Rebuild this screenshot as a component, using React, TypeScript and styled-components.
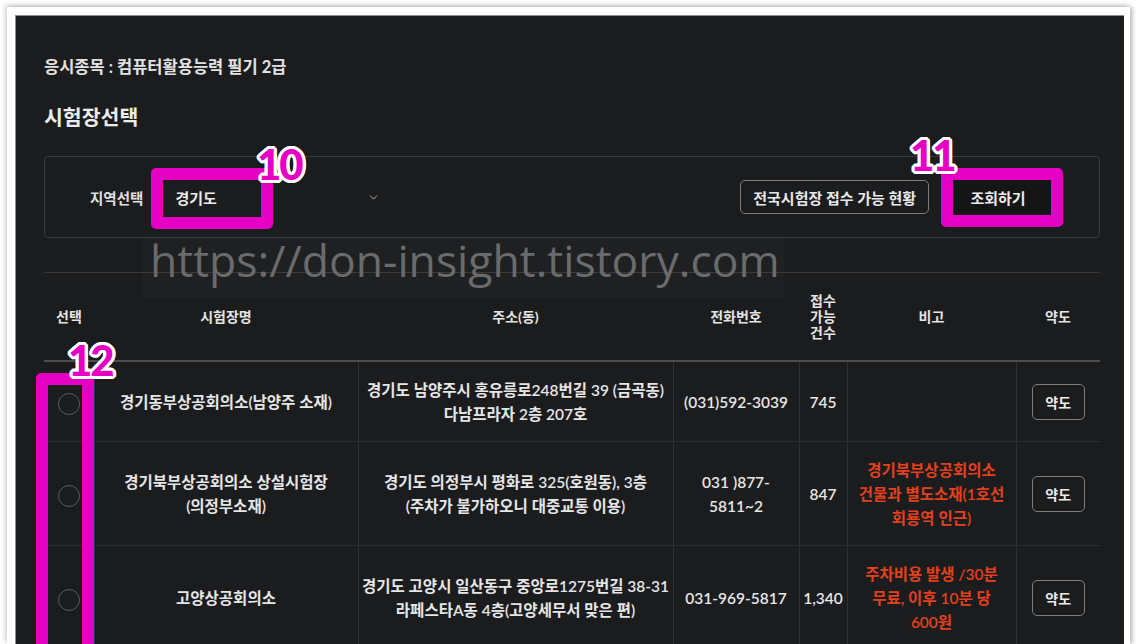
import React from "react";
import styled, { createGlobalStyle } from "styled-components";
import { ChevronDown } from "lucide-react";

const GlobalStyle = createGlobalStyle`
  html, body {
    margin: 0;
    padding: 0;
    background: #ffffff;
  }

  body {
    width: 1140px;
    height: 644px;
    overflow: hidden;
    font-family: "Lato", "Noto Sans CJK KR", sans-serif;
  }
`;

type Row = {
  name: string[];
  address: string[];
  phone: string[];
  count: string;
  note: string[];
};

const rows: Row[] = [
  {
    name: ["경기동부상공회의소(남양주 소재)"],
    address: ["경기도 남양주시 홍유릉로248번길 39 (금곡동)", "다남프라자 2층 207호"],
    phone: ["(031)592-3039"],
    count: "745",
    note: [],
  },
  {
    name: ["경기북부상공회의소 상설시험장", "(의정부소재)"],
    address: ["경기도 의정부시 평화로 325(호원동), 3층", "(주차가 불가하오니 대중교통 이용)"],
    phone: ["031 )877-", "5811~2"],
    count: "847",
    note: ["경기북부상공회의소", "건물과 별도소재(1호선", "회룡역 인근)"],
  },
  {
    name: ["고양상공회의소"],
    address: ["경기도 고양시 일산동구 중앙로1275번길 38-31", "라페스타A동 4층(고양세무서 맞은 편)"],
    phone: ["031-969-5817"],
    count: "1,340",
    note: ["주차비용 발생 /30분", "무료, 이후 10분 당", "600원"],
  },
];

const Lines = ({ lines }: { lines: string[] }) => (
  <>
    {lines.map((line, i) => (
      <React.Fragment key={i}>
        {i > 0 && <br />}
        {line}
      </React.Fragment>
    ))}
  </>
);

const App = () => {
  return (
    <>
      <GlobalStyle />
      <Frame>
        <Sheet>
          <Panel>
            <Subject>응시종목 : 컴퓨터활용능력 필기 2급</Subject>
            <Title>시험장선택</Title>

            <FilterBox>
              <FilterLabel>지역선택</FilterLabel>
              <Select>
                <span>경기도</span>
                <ChevronDown size={13} strokeWidth={1.6} color="#c8c8c8" />
              </Select>
              <Spacer />
              <OutlineButton>전국시험장 접수 가능 현황</OutlineButton>
              <SearchButton>조회하기</SearchButton>
            </FilterBox>

            <Table>
              <colgroup>
                <col style={{ width: 50 }} />
                <col style={{ width: 264 }} />
                <col style={{ width: 315 }} />
                <col style={{ width: 126 }} />
                <col style={{ width: 48 }} />
                <col style={{ width: 169 }} />
                <col style={{ width: 84 }} />
              </colgroup>
              <thead>
                <tr>
                  <HeadCell>선택</HeadCell>
                  <HeadCell>시험장명</HeadCell>
                  <HeadCell>주소(동)</HeadCell>
                  <HeadCell>전화번호</HeadCell>
                  <HeadCell>
                    접수
                    <br />
                    가능
                    <br />
                    건수
                  </HeadCell>
                  <HeadCell>비고</HeadCell>
                  <HeadCell>약도</HeadCell>
                </tr>
              </thead>
              <tbody>
                {rows.map((row, i) => (
                  <tr key={i}>
                    <Cell>
                      <Radio />
                    </Cell>
                    <Cell>
                      <Lines lines={row.name} />
                    </Cell>
                    <Cell>
                      <Lines lines={row.address} />
                    </Cell>
                    <Cell>
                      <Lines lines={row.phone} />
                    </Cell>
                    <Cell>{row.count}</Cell>
                    <Cell $warn>
                      <Lines lines={row.note} />
                    </Cell>
                    <Cell>
                      <MapButton>약도</MapButton>
                    </Cell>
                  </tr>
                ))}
              </tbody>
            </Table>

            <Watermark>https://don-insight.tistory.com</Watermark>

            <Marker $left={135} $top={152} $width={122} $height={61} />
            <MarkerNumber $left={241} $top={127}>10</MarkerNumber>
            <Marker $left={925} $top={152} $width={122} $height={59} />
            <MarkerNumber $left={894} $top={118}>11</MarkerNumber>
            <Marker $left={20} $top={357} $width={58} $height={320} />
            <MarkerNumber $left={52} $top={323}>12</MarkerNumber>
          </Panel>
        </Sheet>
      </Frame>
    </>
  );
};

export default App;

const Frame = styled.div`
  width: 1140px;
  height: 644px;
  box-sizing: border-box;
  padding: 7px 10px 0 7px;
  background: #ffffff;
`;

const Sheet = styled.div`
  height: 100%;
  box-sizing: border-box;
  padding: 8px 6px 0 8px;
  background: #ffffff;
  box-shadow: -2px -2px 5px rgba(0, 0, 0, 0.18), 3px 0 4px rgba(0, 0, 0, 0.22);
`;

const Panel = styled.div`
  position: relative;
  height: 100%;
  box-sizing: border-box;
  overflow: hidden;
  padding: 39px 24px 0 28px;
  background: #1b1c1e;
  border-top: 1px solid #8c8c8c;
  border-left: 1px solid #8c8c8c;
  color: #e6e6e6;
`;

const Subject = styled.div`
  font-size: 16.5px;
  line-height: 24px;
  font-weight: 700;
  color: #e2e2e2;
`;

const Title = styled.h2`
  margin: 23px 0 0;
  font-size: 20.5px;
  line-height: 30px;
  font-weight: 700;
  color: #ececec;
`;

const FilterBox = styled.div`
  margin-top: 24px;
  height: 80px;
  display: flex;
  align-items: center;
  padding: 0 47px 0 45px;
  border: 1px solid #38393b;
  border-radius: 4px;
`;

const FilterLabel = styled.span`
  font-size: 14.5px;
  font-weight: 700;
  color: #e0e0e0;
`;

const Select = styled.div`
  margin-left: 18px;
  width: 225px;
  height: 40px;
  box-sizing: border-box;
  padding: 0 6px 0 14px;
  display: flex;
  align-items: center;
  justify-content: space-between;
  font-size: 15px;
  font-weight: 700;
  color: #ececec;
`;

const Spacer = styled.div`
  flex: 1;
`;

const OutlineButton = styled.button`
  height: 34px;
  padding: 0 12px;
  border: 1px solid #7d7d7d;
  border-radius: 5px;
  background: transparent;
  color: #e8e8e8;
  font-family: inherit;
  font-size: 15px;
  font-weight: 700;
`;

const SearchButton = styled.button`
  margin-left: 15px;
  width: 108px;
  height: 34px;
  border: none;
  border-radius: 4px;
  background: #151516;
  color: #ececec;
  font-family: inherit;
  font-size: 15px;
  font-weight: 700;
`;

const Table = styled.table`
  margin-top: 34px;
  width: 1056px;
  table-layout: fixed;
  border-collapse: collapse;
`;

const HeadCell = styled.th`
  height: 87px;
  padding: 0 4px;
  font-size: 14px;
  line-height: 16px;
  font-weight: 700;
  color: #e4e4e4;
  text-align: center;
  vertical-align: middle;
  border-top: 1px solid #3b3834;
  border-bottom: 2px solid #4e4e4f;
`;

const Cell = styled.td<{ $warn?: boolean }>`
  padding: 16px 2px 15px;
  font-size: 15.5px;
  line-height: 24px;
  font-weight: 600;
  white-space: nowrap;
  text-align: center;
  vertical-align: middle;
  color: ${({ $warn }) => ($warn ? "#e5401d" : "#e6e6e6")};
  border-bottom: 1px solid #2c2d2f;
  border-right: 1px solid #303133;

  &:last-child {
    border-right: none;
  }
`;

const Radio = styled.span`
  display: inline-block;
  width: 22px;
  height: 22px;
  box-sizing: border-box;
  border: 1.5px solid #595a5c;
  border-radius: 50%;
  vertical-align: middle;
`;

const MapButton = styled.button`
  width: 53px;
  height: 36px;
  border: 1px solid #7d7d7d;
  border-radius: 5px;
  background: transparent;
  color: #ececec;
  font-family: inherit;
  font-size: 14px;
  font-weight: 700;
`;

const Watermark = styled.div`
  position: absolute;
  left: 126px;
  top: 220px;
  width: 642px;
  height: 62px;
  padding-left: 8px;
  box-sizing: border-box;
  background: rgba(255, 255, 255, 0.018);
  font-family: "Open Sans", sans-serif;
  font-size: 44.5px;
  line-height: 48px;
  font-weight: 400;
  color: #6a6b6c;
  white-space: nowrap;
`;

const Marker = styled.div<{ $left: number; $top: number; $width: number; $height: number }>`
  position: absolute;
  left: ${({ $left }) => $left}px;
  top: ${({ $top }) => $top}px;
  width: ${({ $width }) => $width}px;
  height: ${({ $height }) => $height}px;
  box-sizing: border-box;
  border: 12px solid #e500c4;
  border-radius: 5px;
`;

const MarkerNumber = styled.div<{ $left: number; $top: number }>`
  position: absolute;
  left: ${({ $left }) => $left}px;
  top: ${({ $top }) => $top}px;
  font-family: "Lato", sans-serif;
  font-size: 42px;
  line-height: 1;
  font-weight: 900;
  letter-spacing: -2px;
  color: #e500c4;
  text-shadow: 3px 0 0 #fff, -3px 0 0 #fff, 0 3px 0 #fff, 0 -3px 0 #fff,
    2px 2px 0 #fff, -2px 2px 0 #fff, 2px -2px 0 #fff, -2px -2px 0 #fff,
    3px 1px 0 #fff, -3px 1px 0 #fff, 3px -1px 0 #fff, -3px -1px 0 #fff,
    1px 3px 0 #fff, -1px 3px 0 #fff, 1px -3px 0 #fff, -1px -3px 0 #fff,
    0 0 5px rgba(0, 0, 0, 0.35);
`;
